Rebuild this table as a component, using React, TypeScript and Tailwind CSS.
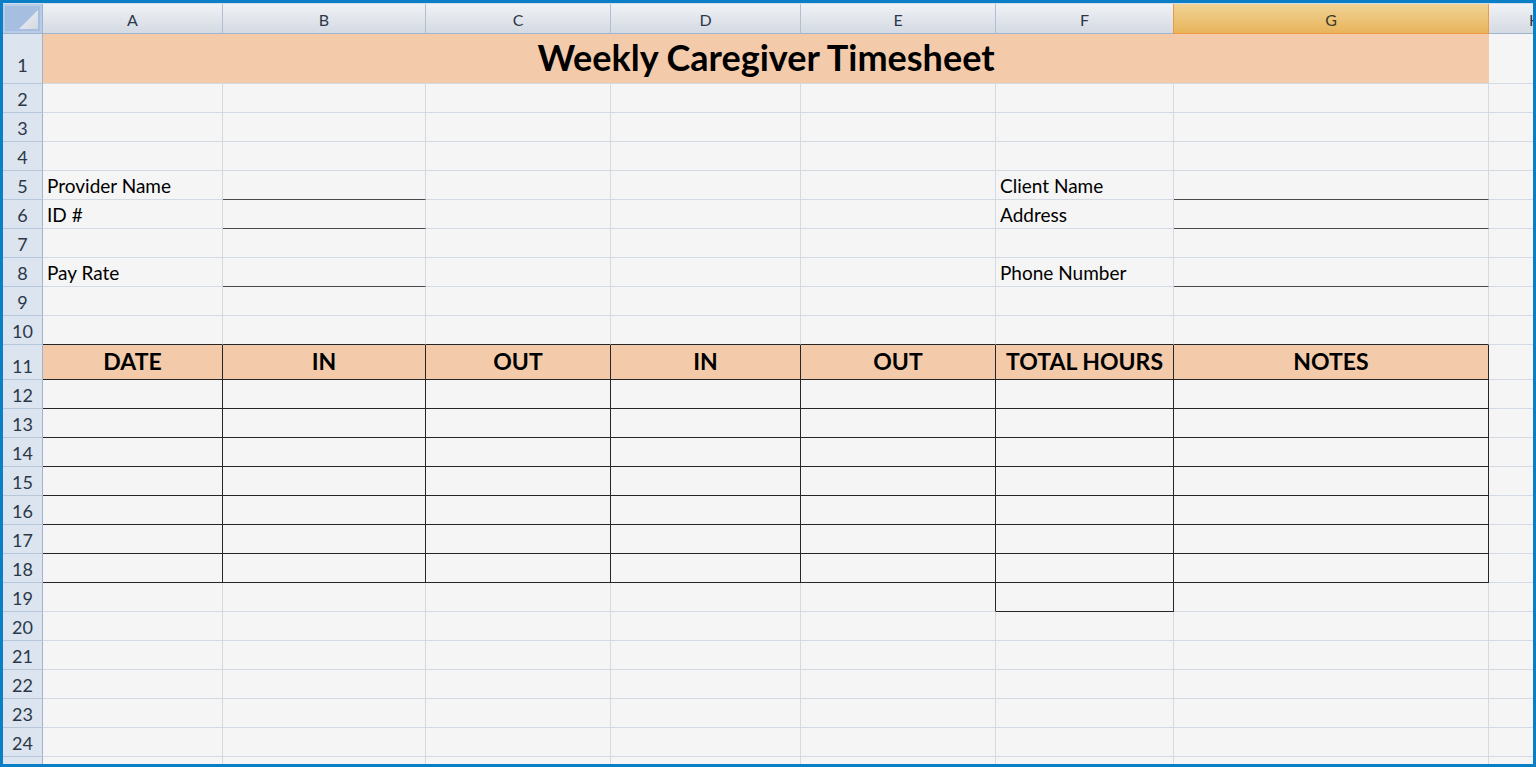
import clsx from "clsx";

const cols = [
  { id: "A", w: "w-[180px]" },
  { id: "B", w: "w-[203px]" },
  { id: "C", w: "w-[185px]" },
  { id: "D", w: "w-[190px]" },
  { id: "E", w: "w-[195px]" },
  { id: "F", w: "w-[178px]" },
  { id: "G", w: "w-[315px]" },
];

const RIGHT = {
  grid: "border-r-[#d4dae3]",
  dark: "border-r-[#262626]",
};

const BOTTOM = {
  grid: "border-b-[#d4dae3]",
  dark: "border-b-[#262626]",
  line: "border-b-[#4a4a4a]",
};

type Side = { right?: keyof typeof RIGHT; bottom?: keyof typeof BOTTOM; text?: string };

const labels: Record<number, [string, string]> = {
  5: ["Provider Name", "Client Name"],
  6: ["ID #", "Address"],
  8: ["Pay Rate", "Phone Number"],
};

const headers = ["DATE", "IN", "OUT", "IN", "OUT", "TOTAL HOURS", "NOTES"];

// borders for one cell of the sheet (rows 2..25, cols 0..6)
function spec(r: number, c: number): Side {
  if (r === 10) return { bottom: "dark" };
  if (r >= 11 && r <= 18) return { right: "dark", bottom: "dark", text: r === 11 ? headers[c] : undefined };
  if (r === 19) {
    if (c === 4) return { right: "dark" };
    if (c === 5) return { right: "dark", bottom: "dark" };
  }
  if (labels[r]) {
    if (c === 0) return { text: labels[r][0] };
    if (c === 5) return { text: labels[r][1] };
    if (c === 1 || c === 6) return { bottom: "line" };
  }
  return {};
}

const RowHead = ({ n, className }: { n?: number; className?: string }) => (
  <div
    className={clsx(
      "flex w-[40px] shrink-0 items-end justify-center border-r border-b border-r-[#9fb5cd] border-b-[#b7c7da] bg-[#dbe4ef] text-[18px] leading-none text-[#2b3848]",
      className ?? "pb-[4px]",
    )}
  >
    {n}
  </div>
);

const ColHead = () => (
  <div className="flex h-[30px] shrink-0">
    <div className="w-[40px] shrink-0 border-r border-b border-r-[#9fb5cd] border-b-[#9fb5cd] bg-[#a6bfe1]">
      <svg viewBox="0 0 39 29" className="h-full w-full">
        <rect x="1" y="1" width="37" height="27" fill="none" stroke="#bed1ea" strokeWidth="1.5" />
        <defs>
          <linearGradient id="tri" x1="0" y1="0" x2="1" y2="1">
            <stop offset="0" stopColor="#f3f5f8" />
            <stop offset="1" stopColor="#d3d8e0" />
          </linearGradient>
        </defs>
        <polygon points="35,6 35,25 16,25" fill="url(#tri)" />
      </svg>
    </div>
    {cols.map((c) => (
      <div
        key={c.id}
        className={clsx(
          "flex shrink-0 items-end justify-center border-r border-b pb-[5px] text-[16px] leading-none",
          c.w,
          c.id === "G"
            ? "border-r-[#ee9a45] border-b-[#ee9a45] bg-gradient-to-b from-[#f0d394] to-[#e8b45a] text-[#3a3a2a]"
            : "border-b-[#9fb5cd] bg-gradient-to-b from-[#f0f2f5] to-[#d4dae3] text-[#2b3848]",
          c.id === "F" ? "border-r-[#ee9a45]" : c.id !== "G" && "border-r-[#b2bfd0]",
        )}
      >
        {c.id}
      </div>
    ))}
    <div className="flex w-[92px] shrink-0 items-end justify-center border-b border-b-[#9fb5cd] bg-gradient-to-b from-[#f0f2f5] to-[#d4dae3] pb-[5px] text-[16px] leading-none text-[#2b3848]">
      H
    </div>
  </div>
);

const SheetRow = ({ r }: { r: number }) => {
  const head = r === 11;
  return (
    <div className={clsx("flex shrink-0", head ? "h-[35px]" : "h-[29px]")}>
      <RowHead n={r < 25 ? r : undefined} />
      {cols.map((c, i) => {
        const s = spec(r, i);
        return (
          <div
            key={c.id}
            className={clsx(
              "flex shrink-0 items-end border-r border-b leading-none text-black",
              c.w,
              RIGHT[s.right ?? "grid"],
              BOTTOM[s.bottom ?? "grid"],
              head
                ? "justify-center bg-[#f3cbab] pb-[6px] text-[23px] font-bold"
                : "bg-[#f5f5f5] pb-[4px] pl-[4px] text-[19px]",
            )}
          >
            {s.text}
          </div>
        );
      })}
      <div className="w-[92px] shrink-0 border-b border-b-[#d4dae3] bg-[#f5f5f5]" />
    </div>
  );
};

export default function App() {
  const rows = Array.from({ length: 24 }, (_, i) => i + 2);
  return (
    <div className="h-[767px] w-[1536px] overflow-hidden border-[3px] border-[#0b7fc5] bg-[#f5f5f5] font-['Lato',sans-serif]">
      <div className="flex h-full flex-col overflow-hidden">
        <div className="h-px shrink-0 bg-[#d2dcea]" />
        <ColHead />
        <div className="flex h-[50px] shrink-0">
          <RowHead n={1} className="pb-[9px]" />
          <div className="flex w-[1446px] shrink-0 items-end justify-center border-b border-b-[#d4dae3] bg-[#f3cbab] pb-[8px] text-[36px] font-bold leading-none text-black">
            Weekly Caregiver Timesheet
          </div>
          <div className="w-[92px] shrink-0 border-b border-b-[#d4dae3] bg-[#f5f5f5]" />
        </div>
        {rows.map((r) => (
          <SheetRow key={r} r={r} />
        ))}
      </div>
    </div>
  );
}
